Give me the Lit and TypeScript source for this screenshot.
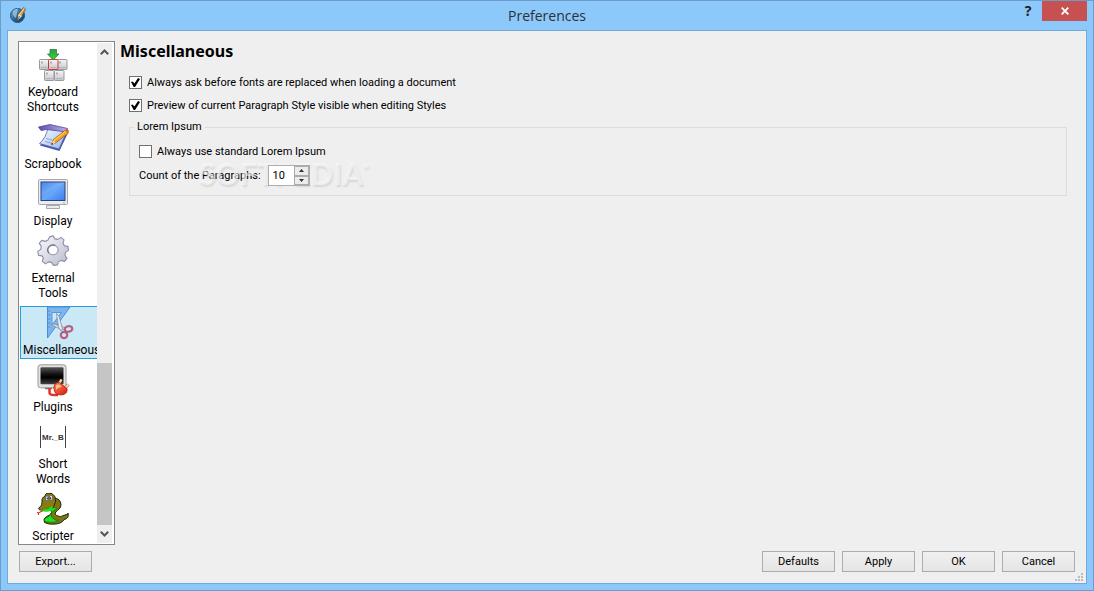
import { LitElement, html, svg, css } from "lit";
import { customElement, property, state } from "lit/decorators.js";
import { classMap } from "lit/directives/class-map.js";

const keyCap = (x: number, y: number, stroke = "#9a9a9e") => svg`
  <rect x=${x + 0.5} y=${y + 0.5} width="9.500" height="10" rx="0.8" fill="url(#key)" stroke=${stroke}/>
  <path d="M${x + 2} ${y + 8.5}h6.500" stroke="#b4b4b8"/>
  <path d="M${x + 3} ${y + 2.5}v2" stroke="#77777c"/>`;

const icons: Record<string, unknown> = {
  keyboard: svg`
    <defs>
      <linearGradient id="key" x2="0" y2="1"><stop stop-color="#f6f6f7"/><stop offset="1" stop-color="#c6c6ca"/></linearGradient>
      <linearGradient id="down" x2="0" y2="1"><stop stop-color="#2f9a4c"/><stop offset="1" stop-color="#35d92c"/></linearGradient>
    </defs>
    ${keyCap(2, 10)}${keyCap(20, 10)}${keyCap(7, 21)}${keyCap(17, 21)}${keyCap(11, 10, "#d6303a")}
    <path d="M13 .5h6.500v4.500h2.500L16.200 11 10.500 5h2.500z" fill="url(#down)" stroke="#2a7d3e" stroke-width=".8"/>`,
  scrapbook: svg`
    <defs>
      <linearGradient id="pad" x2="1" y2="1"><stop stop-color="#fff"/><stop offset="1" stop-color="#8fb6ee"/></linearGradient>
      <linearGradient id="flap" x2="1"><stop stop-color="#5b50a8"/><stop offset="1" stop-color="#b9b2ee"/></linearGradient>
    </defs>
    <path d="M3 24.500 22.500 30 30.500 13 12 9z" fill="#4b57a8"/>
    <path d="M2.500 22.500 22 28 30 10 11 6.500C10 13 7 18.500 2.500 22.500z" fill="url(#pad)" stroke="#5560b0" stroke-width=".8"/>
    <path d="M1.500 6 13 3.500 30.500 7.500 30 11 9.500 8.500 4 9.500z" fill="url(#flap)" stroke="#5248a0" stroke-width=".8"/>
    <path d="M9 17.500l6 1.500M8 20.500l6 1.500" stroke="#8ea6cf"/>
    <path d="M14.500 23.500l1.500-4.500L28.500 9l3 3L18.500 22z" fill="#f8a21c" stroke="#a3541a" stroke-width=".8"/>
    <path d="M17 19.500 28.500 10.200" stroke="#ffe27a"/>
    <path d="M28.500 9l1.200-1q1.500-.3 2 1.500l-.2 2.500z" fill="#e8543a"/>
    <path d="M14.500 23.500l1.500-4.500 2.500 3z" fill="#f7dfb7"/><path d="M14.300 23.800l.7-2.100 1.200 1.400z" fill="#222"/>`,
  display: svg`
    <defs><linearGradient id="crt" x2="1" y2="1"><stop stop-color="#2f74e6"/><stop offset=".5" stop-color="#6aa8fa"/><stop offset="1" stop-color="#3a7cec"/></linearGradient></defs>
    <path d="M10 25h12v3.500h-12z" fill="#c2c2c2"/>
    <path d="M9.500 27.500h13v3h-13z" fill="#ececec" stroke="#a9a9a9"/>
    <rect x="1.500" y="1.500" width="29" height="25" rx="1.200" fill="#ececea" stroke="#a8a8a8"/>
    <rect x="4" y="4" width="24" height="18.500" fill="url(#crt)" stroke="#27418a"/>
    <path d="M4.500 4.500h23L4.500 18z" fill="#fff" opacity=".12"/>
    <circle cx="27" cy="24.800" r=".8" fill="#8bc34a"/>`,
  tools: svg`
    <defs><linearGradient id="gear" x2="1" y2="1"><stop stop-color="#fafaff"/><stop offset="1" stop-color="#b9bacb"/></linearGradient></defs>
    <path d="M12.500 2.500 16 1.500l2 3 3 .5 3-2 3 2.500-1 3.500 1.500 2.500 3.500.5.500 4-3 2-.5 3 2 3-2.500 3-3.500-1-2.500 1.500-1 3-4 .500-2-3-3-.5-3 2-3.200-2.500 1-3.500L5 21.500l-3.500-.500L.8 17l3-2 .5-3-2-3 2.500-3 3.500 1 2.700-1.500z" transform="translate(0 -.6)" fill="url(#gear)" stroke="#8e8ea6" stroke-width="1.100" stroke-linejoin="round"/>
    <ellipse cx="16" cy="15" rx="5.200" ry="4.800" fill="#fff" stroke="#a2a2b6" stroke-width="1.300"/>
    <path d="M12 18a5.300 4.900 0 0 1 6.500-7.500" fill="none" stroke="#77778d" stroke-width="1.200"/>`,
  misc: svg`
    <path d="M8.500 0H31L8.500 31z" fill="#7fb5ed" stroke="#4a8fd6"/>
    <path d="M13 5.500h9.500L13 18z" fill="#cbe8f6" stroke="#5796d8"/>
    <path d="M9.500 4h1.500m-1.500 4h1.500m-1.500 4h1.500m-1.500 4h1.500m-1.500 4h1.500" stroke="#3f7fc4"/>
    <path d="M12 17.500 15 17l12 4-1 1.500L21 22z" fill="#dfe4ea" stroke="#7c8ba0" stroke-width=".8"/>
    <path d="M17.500 6.500 20 9l3.500 13-1.500 2-2.500-4z" fill="#e9edf2" stroke="#7c8ba0" stroke-width=".8"/>
    <ellipse cx="29.500" cy="22" rx="3.800" ry="2.800" fill="none" stroke="#b5607f" stroke-width="2.200" transform="rotate(-10 29.500 22)"/>
    <ellipse cx="25" cy="28" rx="3.200" ry="3.200" fill="none" stroke="#b5607f" stroke-width="2.200"/>`,
  plugins: svg`
    <defs>
      <linearGradient id="scr" x2="0" y2="1"><stop stop-color="#555"/><stop offset=".4" stop-color="#111"/><stop offset=".6" stop-color="#000"/><stop offset="1" stop-color="#444"/></linearGradient>
      <linearGradient id="plug" x2="1" y2="1"><stop stop-color="#ff8a5c"/><stop offset="1" stop-color="#d41a10"/></linearGradient>
    </defs>
    <rect x="1" y=".8" width="28" height="23" rx="2.500" fill="#e2e2e2" stroke="#9a9a9a"/>
    <rect x="3.500" y="3.300" width="23" height="17" rx="1" fill="url(#scr)"/>
    <path d="M8 24.500h7" stroke="#777" stroke-width="1.500"/>
    <path d="M12.500 24v4.500q0 2.500 4.500 2.500h4" fill="none" stroke="#e0352a" stroke-width="2.500"/>
    <path d="M24.500 15.500l-3 5M31.500 20.500l-4 4" stroke="#9a5a48" stroke-width="3"/>
    <path d="M24.500 15.500l-3 5M31.500 20.500l-4 4" stroke="#f8dfba" stroke-width="1.800"/>
    <path d="M18 20q2-2 4.500-1.500l7.500 6q.5 1.500-.5 4-2 2.500-6 2.500-4 0-5.500-2.500-2.500-5 0-8.500z" fill="url(#plug)" stroke="#b5200f" stroke-width=".8"/>
    <path d="M19 21.500q1.500-1.500 3-1l3 2.500q-4 0-6 3z" fill="#ffc08d"/>`,
  words: svg`
    <path d="M3.500 5v22M28.500 5v22" stroke="#444"/>
    <text x="16" y="19" class="glyph" text-anchor="middle">Mr.<tspan fill="#e01818">_</tspan>B</text>`,
  scripter: svg`
    <path d="M17 5q6.500.5 7 6.500.3 3.500-3.500 6-4 2.500-1 5 4 2.500 7.500-.200 2.500-1 3.500-.800l.5-1.500q1.500 5.500-4 6.500-1.500 3.500-8 4.500-7 1-11.500-1.500-2-4 2-6 4-1 5-4 .5-2-2-3.500z" fill="#7d7510" stroke="#222708"/>
    <path d="M14 15q6-1 5.500 1-4 2-5 4-1 1.500.5 4.500 3 3 6.500 3.300-5 2.500-11.500 1.200Q5.500 28 8.500 25q5-1.500 6-5 .5-2-1.500-3.500z" fill="#1fe21f" stroke="#176c12" stroke-width=".7"/>
    <path d="M5 9q-.5-5 3-5.500Q8-.5 12 .8q2-1.500 4 .7 3 1.500 2.500 7-.5 5.500-5 7-6 1.500-10.500 1.500-3-1.500.5-3.500 1.500-1 1.500-4.500z" fill="#8a7a14" stroke="#222708"/>
    <path d="M3 16.300q8 1 13-4-.5 6-6 6.500-5 .5-7-2.500z" fill="#1fe21f"/>
    <path d="M8.500 4q1.500-2 3 0v3q-1.500 1.500-3 0zM12.500 3.500q1.500-2 3 0v3q-1.500 1.500-3 0z" fill="#fff" stroke="#222" stroke-width=".5"/>
    <path d="M10.300 4.500v2M13.600 4.200v2" stroke="#1c2a90" stroke-width="1.300"/>
    <path d="M6 17.500 1.500 20 0 19.500M1.500 20 1.500 22" fill="none" stroke="#ee2020" stroke-width="1.100"/>`,
};

interface Page { id: string; label: string; }

const pages: Page[] = [
  { id: "keyboard", label: "Keyboard Shortcuts" },
  { id: "scrapbook", label: "Scrapbook" },
  { id: "display", label: "Display" },
  { id: "tools", label: "External Tools" },
  { id: "misc", label: "Miscellaneous" },
  { id: "plugins", label: "Plugins" },
  { id: "words", label: "Short Words" },
  { id: "scripter", label: "Scripter" },
];

@customElement("page-list")
class PageList extends LitElement {
  @property() selected = "misc";

  static styles = css`
    :host {
      display: flex;
      flex: 1;
      min-height: 0;
      box-sizing: border-box;
      border: 1px solid #828790;
      background: #fff;
      padding: 1px 2px 1px 1px;
    }
    .items {
      flex: 1;
      min-width: 0;
      overflow: hidden;
      display: flex;
      flex-direction: column;
      gap: 4px;
      padding-top: 5px;
    }
    .item {
      flex: none;
      box-sizing: border-box;
      display: flex;
      flex-direction: column;
      align-items: flex-start;
      gap: 4px;
      padding: 0 0 0 2px;
      border: 1px solid transparent;
      border-right: 0;
      background: none;
      color: #000;
      font: 12px/15px Roboto, sans-serif;
    }
    .selected {
      background: #cbe8f6;
      border-color: #26a0da;
    }
    .icon {
      width: 32px;
      height: 32px;
      display: block;
      margin-left: 14px;
      overflow: visible;
    }
    .name {
      width: 60px;
      text-align: center;
    }
    .glyph {
      font: bold 8px "Liberation Sans", sans-serif;
      fill: #333;
    }
    .selected .icon { margin-left: 16px; }
    .bar {
      width: 15px;
      display: flex;
      flex-direction: column;
      background: #efefef;
    }
    .arrow {
      height: 18px;
      padding: 0;
      border: 0;
      background: none;
      display: grid;
      place-items: center;
    }
    .track { flex: 1; display: flex; flex-direction: column; justify-content: flex-end; }
    .thumb { height: 35%; background: #c5c5c5; }
  `;

  render() {
    return html`
      <div class="items">
        ${pages.map((p) => html`
          <button class=${classMap({ item: true, selected: p.id === this.selected })}
            @click=${() => this.dispatchEvent(new CustomEvent("pick", { detail: p.id }))}>
            <svg class="icon" viewBox="0 0 32 32" aria-hidden="true">${icons[p.id]}</svg>
            <span class="name">${p.label}</span>
          </button>`)}
      </div>
      <div class="bar">
        <button class="arrow" aria-label="Scroll up">
          <svg width="9" height="6"><path d="M.8 5.200 4.500 1.500 8.200 5.200" fill="none" stroke="#555" stroke-width="2"/></svg>
        </button>
        <div class="track"><div class="thumb"></div></div>
        <button class="arrow" aria-label="Scroll down">
          <svg width="9" height="6"><path d="M.8.8 4.500 4.500 8.200.8" fill="none" stroke="#555" stroke-width="2"/></svg>
        </button>
      </div>`;
  }
}

@customElement("app-root")
class AppRoot extends LitElement {
  @state() private page = "misc";

  static styles = css`
    :host {
      display: flex;
      flex-direction: column;
      box-sizing: border-box;
      height: 100vh;
      padding: 0 6px 6px;
      border: 1px solid #6d9cc8;
      background: #8dc8fa;
      color: #000;
      font: 11px/15px Roboto, sans-serif;
    }
    .titlebar {
      display: grid;
      grid-template-columns: 1fr auto 1fr;
      height: 29px;
    }
    .logo { margin: 5px 0 0 3px; }
    .title {
      font: 14px/20px "Open Sans", sans-serif;
      padding-top: 5px;
      color: #2b3137;
    }
    .controls {
      display: flex;
      justify-content: flex-end;
      align-items: flex-start;
    }
    .help, .close {
      border: 0;
      padding: 0;
      height: 20px;
      display: grid;
      place-items: center;
    }
    .help {
      width: 28px;
      background: none;
      font: bold 14px/20px "Noto Sans", sans-serif;
      color: #222;
    }
    .close { width: 45px; background: #c75050; }
    .client {
      flex: 1;
      min-height: 0;
      box-sizing: border-box;
      display: flex;
      flex-direction: column;
      gap: 6px;
      padding: 10px 10px 11px;
      border: 1px solid #74a9d8;
      background: #efefef;
      position: relative;
    }
    .main { flex: 1; min-height: 0; display: flex; gap: 5px; }
    .side { width: 97px; display: flex; flex-direction: column; }
    .panel { flex: 1; min-width: 0; }
    h1 {
      margin: 0;
      font: bold 16px/20px "Noto Sans", sans-serif;
    }
    .options {
      display: flex;
      flex-direction: column;
      gap: 8px;
      padding: 14px 9px 0 9px;
    }
    .check { display: flex; align-items: center; gap: 5px; }
    .check input {
      appearance: none;
      box-sizing: border-box;
      width: 13px;
      height: 13px;
      margin: 0;
      border: 1px solid #707070;
      background: #fff;
      display: grid;
      place-items: center;
    }
    .check input:checked::before {
      content: "";
      width: 9px;
      height: 9px;
      background: #000;
      clip-path: polygon(0 45%, 18% 38%, 38% 62%, 78% 0, 100% 12%, 45% 100%, 30% 100%);
    }
    fieldset {
      margin: 0;
      min-width: 0;
      border: 1px solid #dcdcdc;
      padding: 11px 9px 9px;
      display: flex;
      flex-direction: column;
      gap: 6px;
    }
    legend { padding: 0 3px; margin-left: -5px; line-height: 12px; }
    .count { display: flex; align-items: center; gap: 7px; position: relative; }
    .spin {
      display: flex;
      box-sizing: border-box;
      width: 42px;
      height: 21px;
      border: 1px solid #abadb3;
      background: #fff;
      position: relative;
      z-index: 1;
    }
    .spin input {
      flex: 1;
      min-width: 0;
      border: 0;
      padding: 0 0 0 4px;
      background: none;
      font: inherit;
    }
    .steps { width: 15px; display: flex; flex-direction: column; }
    .steps button {
      flex: 1;
      min-height: 0;
      padding: 0;
      border: 1px solid #acacac;
      background: #ececec;
      display: grid;
      place-items: center;
    }
    .watermark {
      position: absolute;
      left: 60px;
      top: -8px;
      font: bold 30px/32px Lato, sans-serif;
      color: rgba(250, 250, 250, 0.6);
      text-shadow: 1px 2px 2px rgba(0, 0, 0, 0.1);
      pointer-events: none;
    }
    .watermark sup { font-size: 14px; line-height: 12px; vertical-align: 12px; }
    .footer { display: flex; gap: 7px; padding: 0 1px; }
    .footer button {
      box-sizing: border-box;
      width: 73px;
      height: 21px;
      padding: 0;
      border: 1px solid #acacac;
      background: linear-gradient(#f0f0f0, #e5e5e5);
      color: #000;
      font: inherit;
    }
    .footer .export { margin-right: auto; }
    .grip { position: absolute; right: 3px; bottom: 2px; }
  `;

  render() {
    return html`
      <header class="titlebar">
        <svg class="logo" width="18" height="18" viewBox="0 0 18 18" aria-hidden="true">
          <defs><linearGradient id="globe" x2="1" y2="1"><stop stop-color="#7fb2d6"/><stop offset=".6" stop-color="#1d5a88"/><stop offset="1" stop-color="#123c62"/></linearGradient></defs>
          <circle cx="7.500" cy="9.500" r="7" fill="url(#globe)" stroke="#24567e"/>
          <path d="M3 5q2-2.500 5-2.500L6 12q-4-2-3-7z" fill="#a9cfe6" opacity=".7"/>
          <path d="M7.500 14.500 8.500 8l5-6.500 2 1.500L12 10z" fill="#d89a45" stroke="#6e4a22" stroke-width=".7"/>
          <path d="M9.500 8.500l4.500-6" stroke="#fbe3ab"/>
          <path d="M7.500 14.500 8.500 8 12 10z" fill="#f1e4cf"/><path d="M7.500 14.500l2-4.500" stroke="#333" stroke-width=".7"/>
        </svg>
        <div class="title">Preferences</div>
        <div class="controls">
          <button class="help" aria-label="Help">?</button>
          <button class="close" aria-label="Close">
            <svg width="8" height="8"><path d="M.7.7l6.600 6.600M7.300.7.7 7.300" stroke="#fff" stroke-width="1.800"/></svg>
          </button>
        </div>
      </header>
      <section class="client">
        <div class="main">
          <nav class="side">
            <page-list .selected=${this.page} @pick=${(e: CustomEvent) => (this.page = e.detail)}></page-list>
          </nav>
          <main class="panel">
            <h1>Miscellaneous</h1>
            <div class="options">
              <label class="check"><input type="checkbox" checked>Always ask before fonts are replaced when loading a document</label>
              <label class="check"><input type="checkbox" checked>Preview of current Paragraph Style visible when editing Styles</label>
              <fieldset>
                <legend>Lorem Ipsum</legend>
                <label class="check"><input type="checkbox">Always use standard Lorem Ipsum</label>
                <div class="count">
                  <label for="paragraphs">Count of the Paragraphs:</label>
                  <div class="spin">
                    <input id="paragraphs" type="text" inputmode="numeric" value="10">
                    <div class="steps">
                      <button aria-label="More"><svg width="5" height="3"><path d="M0 3 2.500 0 5 3z" fill="#333"/></svg></button>
                      <button aria-label="Fewer"><svg width="5" height="3"><path d="M0 0 2.500 3 5 0z" fill="#333"/></svg></button>
                    </div>
                  </div>
                  <div class="watermark">SOFTPEDIA<sup>°</sup></div>
                </div>
              </fieldset>
            </div>
          </main>
        </div>
        <footer class="footer">
          <button class="export">Export...</button>
          <button>Defaults</button>
          <button>Apply</button>
          <button>OK</button>
          <button>Cancel</button>
        </footer>
        <svg class="grip" width="8" height="8" aria-hidden="true">
          <path d="M6 0h2v2h-2zM3 3h2v2h-2zM6 3h2v2h-2zM0 6h2v2h-2zM3 6h2v2h-2zM6 6h2v2h-2z" fill="#bcbcbc"/>
        </svg>
      </section>`;
  }
}
